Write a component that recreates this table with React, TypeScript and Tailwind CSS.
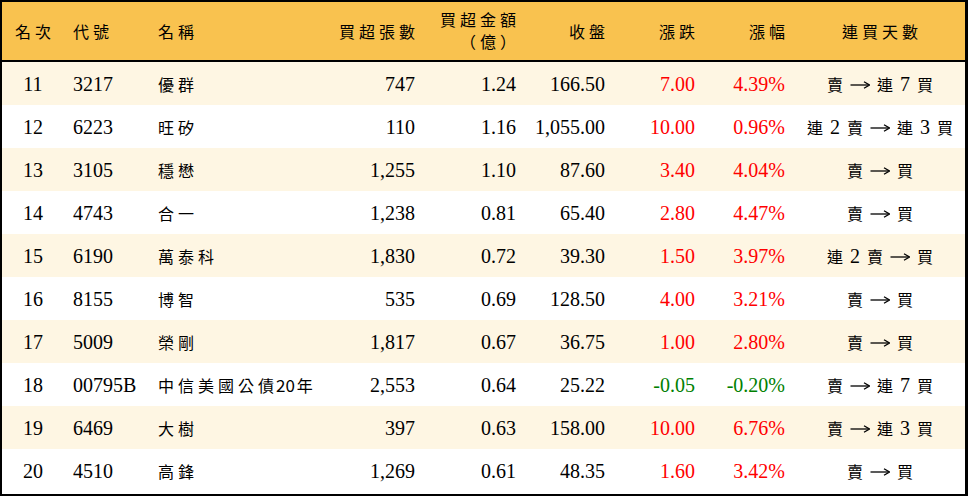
import React from "react";

const CJK_RE = /[\u2e80-\u9fff\uff00-\uffef\u3000-\u303f]/;

function Arrow() {
  return (
    <svg width="20" height="10" viewBox="0 0 20 10" className="inline-block align-middle mb-[2px]">
      <path d="M0.5 5 H18.5" stroke="currentColor" strokeWidth="1.3" fill="none" />
      <path d="M14 1.8 L19.5 5 L14 8.2" stroke="currentColor" strokeWidth="1.3" fill="none" />
    </svg>
  );
}

function Mixed({ text, cjkSize = "text-[16px]" }: { text: string; cjkSize?: string }) {
  const parts: React.ReactNode[] = [];
  let buf = "";
  let key = 0;
  const flush = () => {
    if (buf) {
      parts.push(<span key={key++}>{buf}</span>);
      buf = "";
    }
  };
  for (const ch of Array.from(text)) {
    if (ch === "→") {
      flush();
      parts.push(<Arrow key={key++} />);
    } else if (CJK_RE.test(ch)) {
      flush();
      parts.push(
        <span
          key={key++}
          className={`inline-block w-[20px] text-center ${cjkSize} [font-family:'Noto_Sans_CJK_TC','Noto_Sans_CJK_JP',sans-serif]`}
        >
          {ch}
        </span>
      );
    } else {
      buf += ch;
    }
  }
  flush();
  return <>{parts}</>;
}

type Row = {
  rank: string;
  code: string;
  name: string;
  vol: string;
  amt: string;
  close: string;
  chg: string;
  pct: string;
  days: string;
};

const rows: Row[] = [
  { rank: "11", code: "3217", name: "優群", vol: "747", amt: "1.24", close: "166.50", chg: "7.00", pct: "4.39%", days: "賣 → 連 7 買" },
  { rank: "12", code: "6223", name: "旺矽", vol: "110", amt: "1.16", close: "1,055.00", chg: "10.00", pct: "0.96%", days: "連 2 賣 → 連 3 買" },
  { rank: "13", code: "3105", name: "穩懋", vol: "1,255", amt: "1.10", close: "87.60", chg: "3.40", pct: "4.04%", days: "賣 → 買" },
  { rank: "14", code: "4743", name: "合一", vol: "1,238", amt: "0.81", close: "65.40", chg: "2.80", pct: "4.47%", days: "賣 → 買" },
  { rank: "15", code: "6190", name: "萬泰科", vol: "1,830", amt: "0.72", close: "39.30", chg: "1.50", pct: "3.97%", days: "連 2 賣 → 買" },
  { rank: "16", code: "8155", name: "博智", vol: "535", amt: "0.69", close: "128.50", chg: "4.00", pct: "3.21%", days: "賣 → 買" },
  { rank: "17", code: "5009", name: "榮剛", vol: "1,817", amt: "0.67", close: "36.75", chg: "1.00", pct: "2.80%", days: "賣 → 買" },
  { rank: "18", code: "00795B", name: "中信美國公債20年", vol: "2,553", amt: "0.64", close: "25.22", chg: "-0.05", pct: "-0.20%", days: "賣 → 連 7 買" },
  { rank: "19", code: "6469", name: "大樹", vol: "397", amt: "0.63", close: "158.00", chg: "10.00", pct: "6.76%", days: "賣 → 連 3 買" },
  { rank: "20", code: "4510", name: "高鋒", vol: "1,269", amt: "0.61", close: "48.35", chg: "1.60", pct: "3.42%", days: "賣 → 買" },
];

const GRID = "grid grid-cols-[62px_84px_182px_95px_101px_89px_90px_90px_170px]";

export default function App() {
  return (
    <div className="w-[968px] h-[496px] bg-white border-black border-t-2 border-l-2 border-r-[3px] border-b-2 text-black [font-family:'Liberation_Serif','Noto_Sans_CJK_TC',serif] overflow-hidden">
      <div className={`${GRID} h-[60px] bg-[#f9c24f] border-b-2 border-black text-[16px] leading-[20px]`}>
        <div className="flex items-center justify-center">
          <Mixed text="名次" />
        </div>
        <div className="flex items-center pl-[7px]">
          <Mixed text="代號" />
        </div>
        <div className="flex items-center pl-[8px]">
          <Mixed text="名稱" />
        </div>
        <div className="flex items-center justify-end pr-[8px]">
          <Mixed text="買超張數" />
        </div>
        <div className="flex flex-col items-end justify-center pr-[8px]">
          <div>
            <Mixed text="買超金額" />
          </div>
          <div>
            <Mixed text="（億）" />
          </div>
        </div>
        <div className="flex items-center justify-end pr-[8px]">
          <Mixed text="收盤" />
        </div>
        <div className="flex items-center justify-end pr-[8px]">
          <Mixed text="漲跌" />
        </div>
        <div className="flex items-center justify-end pr-[8px]">
          <Mixed text="漲幅" />
        </div>
        <div className="flex items-center justify-center">
          <Mixed text="連買天數" />
        </div>
      </div>
      {rows.map((r, i) => {
        const neg = r.chg.startsWith("-");
        const color = neg ? "text-[#008000]" : "text-[#ff0000]";
        return (
          <div
            key={r.rank}
            className={`${GRID} h-[43px] text-[20px] leading-[24px] ${i % 2 === 0 ? "bg-[#fef6e3]" : "bg-white"}`}
          >
            <div className="flex items-center justify-center">{r.rank}</div>
            <div className="flex items-center pl-[9px]">{r.code}</div>
            <div className="flex items-center pl-[8px] text-[17px] [font-family:'Noto_Sans_CJK_TC',sans-serif]">
              <span>
                <Mixed text={r.name} />
              </span>
            </div>
            <div className="flex items-center justify-end pr-[10px]">{r.vol}</div>
            <div className="flex items-center justify-end pr-[10px]">{r.amt}</div>
            <div className="flex items-center justify-end pr-[10px]">{r.close}</div>
            <div className={`flex items-center justify-end pr-[10px] ${color}`}>{r.chg}</div>
            <div className={`flex items-center justify-end pr-[10px] ${color}`}>{r.pct}</div>
            <div className="flex items-center justify-center">
              <span className="whitespace-pre">
                <Mixed text={r.days} />
              </span>
            </div>
          </div>
        );
      })}
    </div>
  );
}
